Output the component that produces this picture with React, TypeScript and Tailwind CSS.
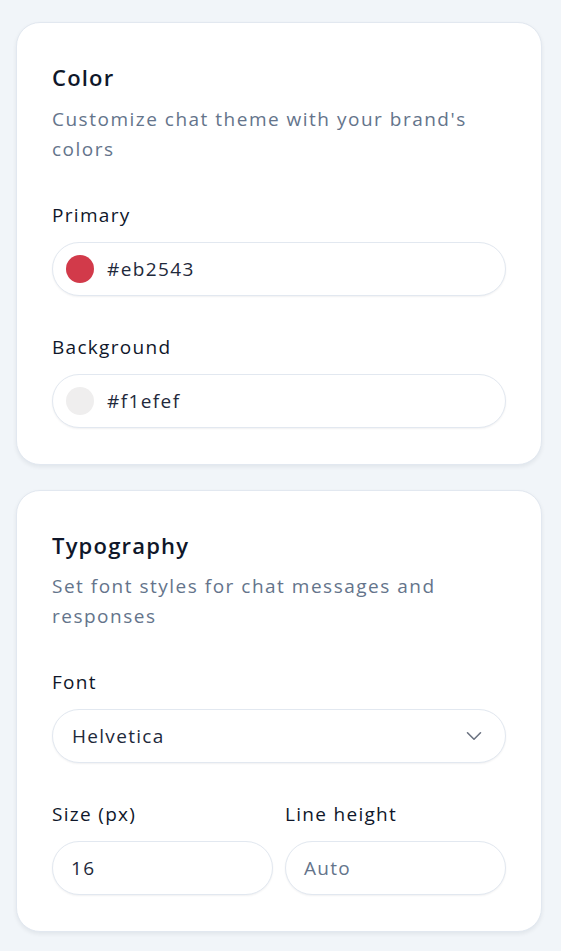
import React from "react";

const font = { fontFamily: '"Open Sans", "Noto Sans", sans-serif' };

function Label({ children }: { children: React.ReactNode }) {
  return <div className="text-[19px] leading-[28px] font-medium text-[#0f172a] tracking-[1.3px]">{children}</div>;
}

function ColorField({ color, value }: { color: string; value: string }) {
  return (
    <div className="flex items-center h-[54px] rounded-full border border-[#e2e8f0] bg-white shadow-[0_1px_2px_rgba(15,23,42,0.06)] pl-[13px] pr-4 gap-[13px]">
      <span className="w-[28px] h-[28px] rounded-full shrink-0" style={{ backgroundColor: color }} />
      <span className="text-[19px] text-[#1e293b] tracking-[1.4px]">{value}</span>
    </div>
  );
}

const card =
  "bg-white rounded-[24px] border border-[#e2e8f0] shadow-[0_2px_4px_rgba(15,23,42,0.07)] px-[35px] pt-[38px] pb-[36px]";

export default function App() {
  return (
    <div className="min-h-screen bg-[#f1f5f9] pl-4 pr-[19px] pt-[22px] pb-5 flex flex-col gap-[25px]" style={font}>
      <div className={card}>
        <div className="text-[22px] leading-[32px] font-semibold text-[#0f172a] tracking-[1.2px]">Color</div>
        <div className="mt-[11px] text-[19px] leading-[30px] text-[#64748b] tracking-[1.5px]">Customize chat theme with your brand's colors</div>
        <div className="mt-[37px] flex flex-col gap-[13px]">
          <Label>Primary</Label>
          <ColorField color="#d23a4a" value="#eb2543" />
        </div>
        <div className="mt-[37px] flex flex-col gap-[13px]">
          <Label>Background</Label>
          <ColorField color="#efeeee" value="#f1efef" />
        </div>
      </div>

      <div className={card}>
        <div className="text-[22px] leading-[32px] font-semibold text-[#0f172a] tracking-[1.2px]">Typography</div>
        <div className="mt-[10px] text-[19px] leading-[30px] text-[#64748b] tracking-[1.5px]">Set font styles for chat messages and responses</div>
        <div className="mt-[37px] flex flex-col gap-[13px]">
          <Label>Font</Label>
          <div className="flex items-center justify-between h-[54px] rounded-full border border-[#e2e8f0] bg-white shadow-[0_1px_2px_rgba(15,23,42,0.06)] pl-[19px] pr-[23px]">
            <span className="text-[19px] text-[#1e293b] tracking-[1.3px]">Helvetica</span>
            <svg width="16" height="10" viewBox="0 0 16 10" fill="none" stroke="#6b7280" strokeWidth="1.6" strokeLinecap="round" strokeLinejoin="round">
              <path d="M1.5 1.8 8 8.2l6.5-6.4" />
            </svg>
          </div>
        </div>
        <div className="mt-[37px] grid grid-cols-2 gap-[12px]">
          <div className="flex flex-col gap-[13px]">
            <Label>Size (px)</Label>
            <div className="flex items-center h-[54px] rounded-full border border-[#e2e8f0] bg-white shadow-[0_1px_2px_rgba(15,23,42,0.06)] px-[18px]">
              <span className="text-[19px] text-[#1e293b] tracking-[1.3px]">16</span>
            </div>
          </div>
          <div className="flex flex-col gap-[13px]">
            <Label>Line height</Label>
            <div className="flex items-center h-[54px] rounded-full border border-[#e2e8f0] bg-white shadow-[0_1px_2px_rgba(15,23,42,0.06)] px-[18px]">
              <span className="text-[19px] text-[#64748b] tracking-[1.3px]">Auto</span>
            </div>
          </div>
        </div>
      </div>
    </div>
  );
}
